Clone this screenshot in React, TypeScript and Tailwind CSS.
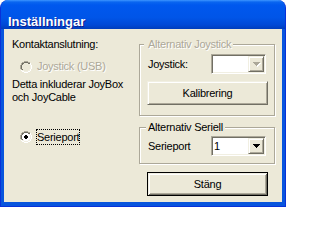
import React from 'react';

const FACE = '#ECE9D8';

const RADIO = [
  '....SSSS....',
  '..SSDDDDSS..',
  '.SDDWWWWDDH.',
  '.SDWWWWWWLH.',
  'SDWWWWWWWWLH',
  'SDWWWWWWWWLH',
  'SDWWWWWWWWLH',
  'SDWWWWWWWWLH',
  '.SDWWWWWWLH.',
  '.HLLWWWWLLH.',
  '..HHLLLLHH..',
  '....HHHH....',
];

const DOT = [
  [5, 4, 2],
  [4, 5, 4],
  [4, 6, 4],
  [5, 7, 2],
];

function Radio({ checked, disabled }: { checked?: boolean; disabled?: boolean }) {
  const colors: Record<string, string> = {
    S: '#ACA899',
    D: '#716F64',
    L: '#F1EFE2',
    H: '#FFFFFF',
    W: disabled ? FACE : '#FFFFFF',
  };
  return (
    <svg width="12" height="12" viewBox="0 0 12 12" shapeRendering="crispEdges" className="shrink-0">
      {RADIO.map((row, y) =>
        row.split('').map((c, x) =>
          c === '.' ? null : <rect key={`${x}-${y}`} x={x} y={y} width="1" height="1" fill={colors[c]} />
        )
      )}
      {checked &&
        DOT.map(([x, y, w]) => <rect key={`d${y}`} x={x} y={y} width={w} height="1" fill="#000" />)}
    </svg>
  );
}

function Arrow({ disabled }: { disabled?: boolean }) {
  const d = 'M0 0h7v1H0z M1 1h5v1H1z M2 2h3v1H2z M3 3h1v1H3z';
  return (
    <svg width="8" height="5" viewBox="0 0 8 5" shapeRendering="crispEdges">
      {disabled && <path d={d} fill="#fff" transform="translate(1 1)" />}
      <path d={d} fill={disabled ? '#ACA899' : '#000'} />
    </svg>
  );
}

function Combo({ value, disabled }: { value?: string; disabled?: boolean }) {
  return (
    <div className="flex h-[20px] w-[55px] shrink-0 border border-t-[#ACA899] border-l-[#ACA899] border-b-white border-r-white bg-white p-[1px] shadow-[inset_1px_1px_0_#716f64,inset_-1px_-1px_0_#f1efe2]">
      <div className="flex flex-1 items-center pl-[1px] text-black">{value}</div>
      <div className="flex h-[16px] w-[16px] items-center justify-center border border-t-[#F1EFE2] border-l-[#F1EFE2] border-b-[#716F64] border-r-[#716F64] bg-[#ECE9D8] pl-[1px] shadow-[inset_1px_1px_0_#fff,inset_-1px_-1px_0_#aca899]">
        <Arrow disabled={disabled} />
      </div>
    </div>
  );
}

function Button({ label, isDefault }: { label: string; isDefault?: boolean }) {
  return (
    <button
      className={
        isDefault
          ? 'flex h-[24px] w-[121px] items-center justify-center border border-black bg-[#ECE9D8] leading-[13px] text-black shadow-[inset_1px_1px_0_#f1efe2,inset_-1px_-1px_0_#716f64,inset_2px_2px_0_#fff,inset_-2px_-2px_0_#aca899]'
          : 'flex h-[24px] w-[121px] items-center justify-center border border-t-[#F1EFE2] border-l-[#F1EFE2] border-b-[#716F64] border-r-[#716F64] bg-[#ECE9D8] leading-[13px] text-black shadow-[inset_1px_1px_0_#fff,inset_-1px_-1px_0_#aca899]'
      }
    >
      {label}
    </button>
  );
}

function GroupBox({
  title,
  disabled,
  className,
  children,
}: {
  title: string;
  disabled?: boolean;
  className: string;
  children: React.ReactNode;
}) {
  return (
    <div
      className={`relative border border-[#ACA899] shadow-[inset_1px_1px_0_#fff,1px_1px_0_#fff] ${className}`}
    >
      <span
        className={
          disabled
            ? 'absolute left-[4px] top-[-7px] bg-[#ECE9D8] pl-[4px] pr-[2px] leading-[13px] text-[#ACA899] [text-shadow:1px_1px_0_#fff]'
            : 'absolute left-[6px] top-[-7px] bg-[#ECE9D8] pl-[2px] pr-[2px] leading-[13px] text-black'
        }
      >
        {title}
      </span>
      {children}
    </div>
  );
}

export default function App() {
  return (
    <div className="h-[207px] w-[286px] bg-white font-['Liberation_Sans',Arial,sans-serif]">
      <div className="flex h-full flex-col overflow-hidden rounded-t-[8px] border-x border-b border-[#0831D9] bg-[#0855DD]">
        <div className="h-[29px] shrink-0 bg-[linear-gradient(180deg,#3d95ff_0px,#0a66f0_2px,#0058ee_5px,#0055e8_60%,#0049d6_86%,#003dbb_100%)] pl-[7px] pt-[9px]">
          <span className="text-[13px] font-bold leading-[15px] text-white [text-shadow:1px_1px_0_#0f1e8c]">
            Inställningar
          </span>
        </div>

        <div className="flex flex-1 px-[3px] pb-[4px]">
          <div className="flex flex-1 bg-[#ECE9D8] text-[11px] tracking-[-0.25px] text-black">
            <div className="flex w-[135px] flex-col pl-[8px] pt-[9px]">
              <p className="leading-[13px]">Kontaktanslutning:</p>
              <div className="mt-[9px] flex h-[13px] items-center gap-[5px] pl-[8px]">
                <Radio disabled />
                <span className="leading-[13px] text-[#ACA899] [text-shadow:1px_1px_0_#fff]">Joystick (USB)</span>
              </div>
              <p className="mt-[5px] leading-[13px]">
                Detta inkluderar JoyBox
                <br />
                och JoyCable
              </p>
              <div className="mt-[25px] flex h-[16px] items-center gap-[4px] pl-[8px]">
                <Radio checked />
                <span className="border border-dotted border-black leading-[14px]">Serieport</span>
              </div>
            </div>

            <div className="flex w-[136px] flex-col pt-[15px]">
              <GroupBox title="Alternativ Joystick" disabled className="h-[72px] pt-[9px]">
                <div className="flex h-[20px] items-center pl-[8px] pr-[8px]">
                  <span className="flex-1 leading-[13px]">Joystick:</span>
                  <Combo disabled />
                </div>
                <div className="mt-[7px] pl-[7px]">
                  <Button label="Kalibrering" />
                </div>
              </GroupBox>

              <GroupBox title="Alternativ Seriell" className="mt-[11px] h-[37px] pt-[8px]">
                <div className="flex h-[20px] items-center pl-[8px] pr-[8px]">
                  <span className="flex-1 leading-[13px]">Serieport</span>
                  <Combo value="1" />
                </div>
              </GroupBox>

              <div className="mt-[8px] pl-[8px]">
                <Button label="Stäng" isDefault />
              </div>
            </div>
          </div>
        </div>
      </div>
    </div>
  );
}
